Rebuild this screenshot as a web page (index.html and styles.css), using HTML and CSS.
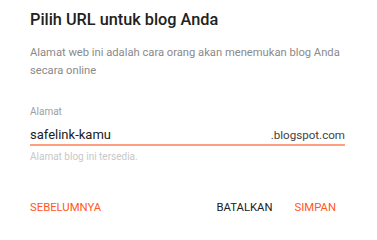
FILE: index.html
```html
<!DOCTYPE html>
<html lang="id">
<head>
<meta charset="utf-8">
<link rel="stylesheet" href="styles.css">
</head>
<body>
<div class="dialog">
  <h1 class="title">Pilih URL untuk blog Anda</h1>
  <p class="desc">Alamat web ini adalah cara orang akan menemukan blog Anda secara online</p>
  <div class="field">
    <div class="label">Alamat</div>
    <div class="input-row">
      <span class="value">safelink-kamu</span>
      <span class="suffix">.blogspot.com</span>
    </div>
    <div class="helper">Alamat blog ini tersedia.</div>
  </div>
  <div class="actions">
    <button class="btn btn-accent">SEBELUMNYA</button>
    <div class="right">
      <button class="btn btn-dark">BATALKAN</button>
      <button class="btn btn-accent">SIMPAN</button>
    </div>
  </div>
</div>
</body>
</html>
```

FILE: styles.css
```css
html, body {
  margin: 0;
  padding: 0;
  background: #ffffff;
}
.dialog {
  font-family: Roboto, "Noto Sans", sans-serif;
  padding: 10px 32px 0 30px;
  width: 377px;
  box-sizing: border-box;
}
.title {
  margin: 0;
  font-size: 16.3px;
  line-height: 20px;
  font-weight: 500;
  color: #212121;
}
.desc {
  margin: 14px 0 0;
  font-size: 11.2px;
  line-height: 18px;
  color: #8a8a8a;
}
.field {
  margin-top: 26px;
}
.label {
  font-size: 10px;
  line-height: 12px;
  color: #9e9e9e;
}
.input-row {
  margin-top: 9px;
  display: flex;
  justify-content: space-between;
  align-items: baseline;
  padding-bottom: 1px;
  border-bottom: 2px solid #ff9e80;
}
.value {
  font-size: 13px;
  line-height: 16px;
  color: #212121;
}
.suffix {
  font-size: 11.6px;
  line-height: 16px;
  color: #424242;
}
.helper {
  margin-top: 5px;
  font-size: 10px;
  line-height: 12px;
  color: #c8c8c8;
}
.actions {
  margin-top: 38px;
  margin-right: 9px;
  display: flex;
  justify-content: space-between;
  align-items: center;
}
.right {
  display: flex;
  gap: 22px;
}
.btn {
  font-family: Roboto, "Noto Sans", sans-serif;
  font-size: 11.3px;
  line-height: 14px;
  background: none;
  border: 0;
  padding: 0;
  margin: 0;
  cursor: pointer;
}
.btn-accent {
  color: #ff5722;
}
.btn-dark {
  color: #212121;
}
```
